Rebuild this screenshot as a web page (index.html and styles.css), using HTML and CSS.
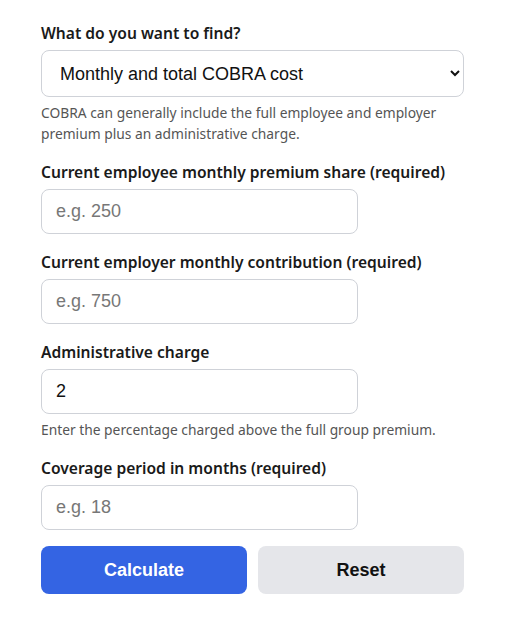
FILE: index.html
```html
<!DOCTYPE html>
<html lang="en">
<head>
    <meta charset="UTF-8">
    <meta name="viewport" content="width=device-width, initial-scale=1.0">
    <title>COBRA Cost Calculator</title>
    <link rel="stylesheet" href="styles.css">
</head>
<body>
    <form class="calculator" id="cobraForm">
        <div class="form-group">
            <label for="findWhat">What do you want to find?</label>
            <select id="findWhat" class="wide">
                <option>Monthly and total COBRA cost</option>
                <option>Monthly COBRA cost only</option>
            </select>
            <p class="help">COBRA can generally include the full employee and employer premium plus an administrative charge.</p>
        </div>

        <div class="form-group">
            <label for="employeeShare">Current employee monthly premium share (required)</label>
            <input type="text" id="employeeShare" placeholder="e.g. 250">
        </div>

        <div class="form-group">
            <label for="employerShare">Current employer monthly contribution (required)</label>
            <input type="text" id="employerShare" placeholder="e.g. 750">
        </div>

        <div class="form-group">
            <label for="adminCharge">Administrative charge</label>
            <input type="text" id="adminCharge" value="2">
            <p class="help">Enter the percentage charged above the full group premium.</p>
        </div>

        <div class="form-group">
            <label for="months">Coverage period in months (required)</label>
            <input type="text" id="months" placeholder="e.g. 18">
        </div>

        <div class="actions">
            <button type="submit" class="btn btn-primary">Calculate</button>
            <button type="reset" class="btn btn-secondary">Reset</button>
        </div>
    </form>
</body>
</html>
```

FILE: styles.css
```css
body {
    margin: 0;
    padding: 21px 41px;
    background: #fff;
    font-family: "Noto Sans", Arial, sans-serif;
    color: #1a1a1a;
}

.calculator {
    width: 423px;
}

.form-group {
    margin-bottom: 16px;
}

label {
    display: block;
    font-size: 15.6px;
    line-height: 24px;
    font-weight: 600;
    color: #1a1a1a;
    margin-bottom: 5px;
}

input,
select {
    box-sizing: border-box;
    display: block;
    font-family: "Liberation Sans", Arial, sans-serif;
    font-size: 18px;
    color: #111;
    background: #fff;
    border: 1px solid #cfd2d8;
    border-radius: 8px;
}

input {
    width: 317px;
    height: 45px;
    padding: 0 14px;
}

input::placeholder {
    color: #777;
}

select.wide {
    width: 100%;
    height: 47px;
    padding: 0 14px;
}

.help {
    margin: 5px 0 0;
    font-size: 13.8px;
    line-height: 21px;
    color: #555;
}

.actions {
    display: grid;
    grid-template-columns: 1fr 1fr;
    gap: 11px;
}

.btn {
    height: 48px;
    border: none;
    border-radius: 8px;
    font-family: "Liberation Sans", Arial, sans-serif;
    font-size: 18px;
    font-weight: bold;
    cursor: pointer;
}

.btn-primary {
    background: #3464e3;
    color: #fff;
}

.btn-secondary {
    background: #e5e6ea;
    color: #111;
}
```
